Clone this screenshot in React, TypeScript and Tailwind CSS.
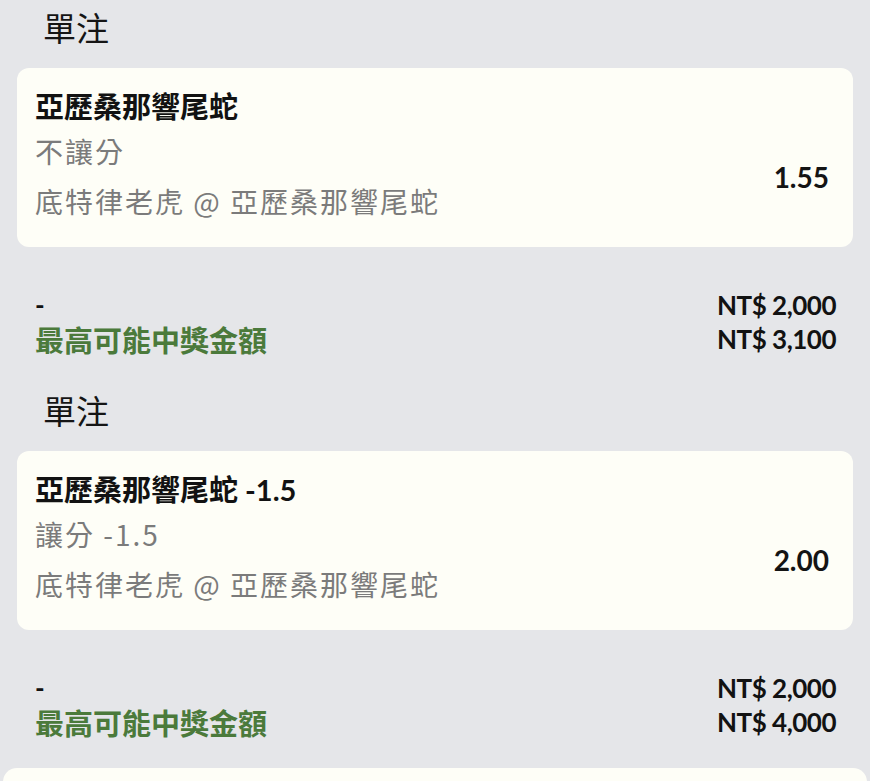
import React from "react";

type Bet = {
  title: string;
  market: string;
  match: string;
  odds: string;
  stake: string;
  payout: string;
};

const bets: Bet[] = [
  {
    title: "亞歷桑那響尾蛇",
    market: "不讓分",
    match: "底特律老虎 @ 亞歷桑那響尾蛇",
    odds: "1.55",
    stake: "NT$ 2,000",
    payout: "NT$ 3,100",
  },
  {
    title: "亞歷桑那響尾蛇 -1.5",
    market: "讓分 -1.5",
    match: "底特律老虎 @ 亞歷桑那響尾蛇",
    odds: "2.00",
    stake: "NT$ 2,000",
    payout: "NT$ 4,000",
  },
];

function BetSection({ bet, first }: { bet: Bet; first: boolean }) {
  return (
    <div className={first ? "" : "mt-[27px]"}>
      <div className="h-[54px] pl-[43px] flex items-center text-[33px] leading-none text-[#151515] font-['Noto_Sans_CJK_TC','Noto_Sans',sans-serif]">
        單注
      </div>
      <div className="mt-[14px] mx-[17px] h-[179px] rounded-[12px] bg-[#fefef7] pl-[18px] pr-[24px] pt-[18px] pb-[21px] flex">
        <div className="flex-1 flex flex-col">
          <div className="h-[40px] flex items-center text-[29px] leading-none font-bold text-[#121212] font-['Lato','Noto_Sans_CJK_TC',sans-serif]">
            {bet.title}
          </div>
          <div className="h-[50px] flex items-center text-[28px] leading-none text-[#7b7b7b] tracking-[2px] font-['Noto_Sans_CJK_TC','Noto_Sans',sans-serif]">
            {bet.market}
          </div>
          <div className="h-[50px] flex items-center text-[28px] leading-none text-[#7b7b7b] tracking-[2px] font-['Noto_Sans_CJK_TC','Noto_Sans',sans-serif]">
            {bet.match}
          </div>
        </div>
        <div className="flex items-center pt-[42px] text-[28px] leading-none font-bold text-[#141414] font-['Lato','Noto_Sans_CJK_TC',sans-serif]">
          {bet.odds}
        </div>
      </div>
      <div className="mt-[41px] pl-[35px] pr-[34px]">
        <div className="h-[34px] flex items-center justify-between font-['Lato','Noto_Sans_CJK_TC',sans-serif] font-bold text-[#121212] leading-none">
          <span className="text-[26px]">-</span>
          <span className="text-[26px] tracking-[-0.5px]">{bet.stake}</span>
        </div>
        <div className="h-[34px] flex items-center justify-between leading-none">
          <span className="text-[29px] font-bold text-[#4b7a3b] font-['Noto_Sans_CJK_TC','Noto_Sans',sans-serif]">
            最高可能中獎金額
          </span>
          <span className="text-[26px] font-bold text-[#121212] tracking-[-0.5px] font-['Lato','Noto_Sans_CJK_TC',sans-serif]">
            {bet.payout}
          </span>
        </div>
      </div>
    </div>
  );
}

export default function App() {
  return (
    <div className="w-[870px] h-[781px] overflow-hidden bg-[#e5e6e9]">
      {bets.map((b, i) => (
        <BetSection key={i} bet={b} first={i === 0} />
      ))}
      <div className="mt-[29px] mx-[3px] h-[60px] rounded-[14px] bg-[#fefef7]" />
    </div>
  );
}
